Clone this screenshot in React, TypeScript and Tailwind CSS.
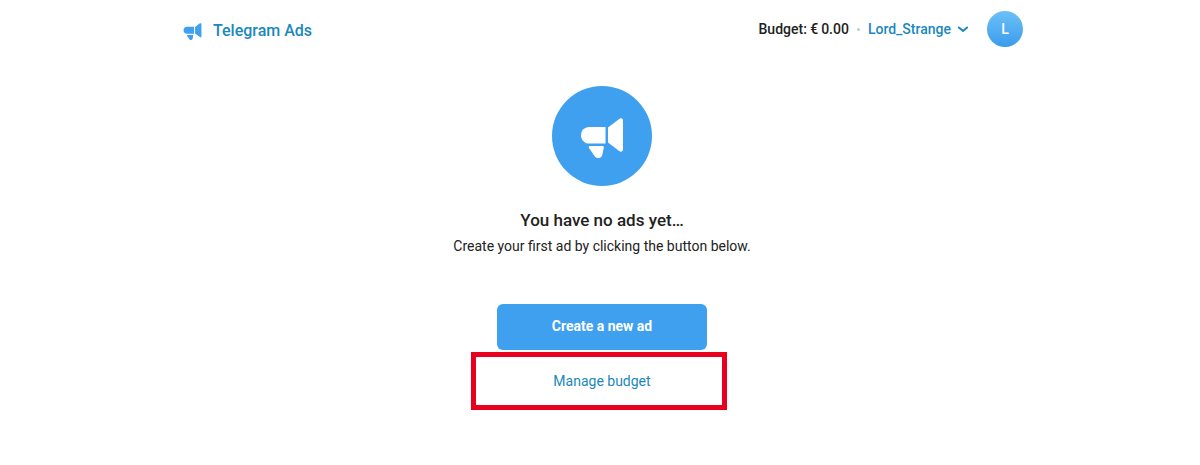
import React from "react";

function Megaphone({ className }: { className: string }) {
  return (
    <svg viewBox="28 32 42 40" className={className} fill="currentColor">
      <path d="M36 41H52.500V57.500H36C31.500 57.500 28 53.800 28 49.200C28 44.600 31.500 41 36 41Z" />
      <path d="M55 41.500L66.500 32.800C68 31.700 70 32.700 70 34.600V63.500C70 65.400 68 66.300 66.500 65.200L55 56.500Z" />
      <path d="M37 60H49.500C50.500 60 51 60.800 50.800 61.700L49.500 68C48.700 72.800 43.800 73.500 41.500 70L36 62C35.500 61 36 60 37 60Z" />
    </svg>
  );
}

export default function App() {
  return (
    <div className="min-h-[465px] bg-white pl-[4px] font-['Roboto',sans-serif] text-[#222222]">
      <div className="pl-[2px]">
        <header className="mx-auto flex h-[60px] w-[840px] items-center justify-between">
          <div className="flex items-center gap-[11px] pt-[2px] text-[#1a88bd]">
            <Megaphone className="h-[17px] w-[19px] text-[#3ea0ef]" />
            <span className="text-[16px] font-medium">Telegram Ads</span>
          </div>
          <div className="flex items-center pb-[2px] text-[14px]">
            <span className="font-medium">Budget: €&#8201;0.00</span>
            <span className="mx-[8px] h-[3px] w-[3px] rounded-full bg-[#c4c9cc]" />
            <span className="font-medium text-[#1a88bd]">Lord_Strange</span>
            <svg viewBox="0 0 12 8" className="ml-[6px] h-[7px] w-[12px] text-[#1a88bd]" fill="none" stroke="currentColor" strokeWidth="2.2" strokeLinecap="round" strokeLinejoin="round">
              <path d="M1.300 1.700L6 5.700L10.700 1.700" />
            </svg>
            <span className="ml-[18px] flex h-9 w-9 items-center justify-center rounded-full bg-gradient-to-b from-[#6cc0f6] to-[#3a9cec] font-medium text-white">L</span>
          </div>
        </header>
      </div>
      <main className="flex flex-col items-center pt-[26px]">
        <div className="flex h-[100px] w-[100px] items-center justify-center rounded-full bg-[#3ea0ef]">
          <Megaphone className="mt-[4px] h-[40px] w-[42px] text-white" />
        </div>
        <h1 className="mt-[23px] text-[17px] font-medium leading-[23px]">You have no ads yet…</h1>
        <p className="mt-[4px] text-[14px] leading-[20px]">Create your first ad by clicking the button below.</p>
        <button className="mt-[48px] h-[46px] w-[210px] rounded-[6px] bg-[#3ea0ef] pb-[2px] text-[14px] font-bold text-white">Create a new ad</button>
        <div className="relative mt-[2px] flex h-[58px] w-[256px] items-center justify-center text-[14px] text-[#1a88bd]">
          Manage budget
          <div className="absolute inset-y-0 left-[-3px] right-[3px] border-[5px] border-[#e8001f]" />
        </div>
      </main>
    </div>
  );
}
